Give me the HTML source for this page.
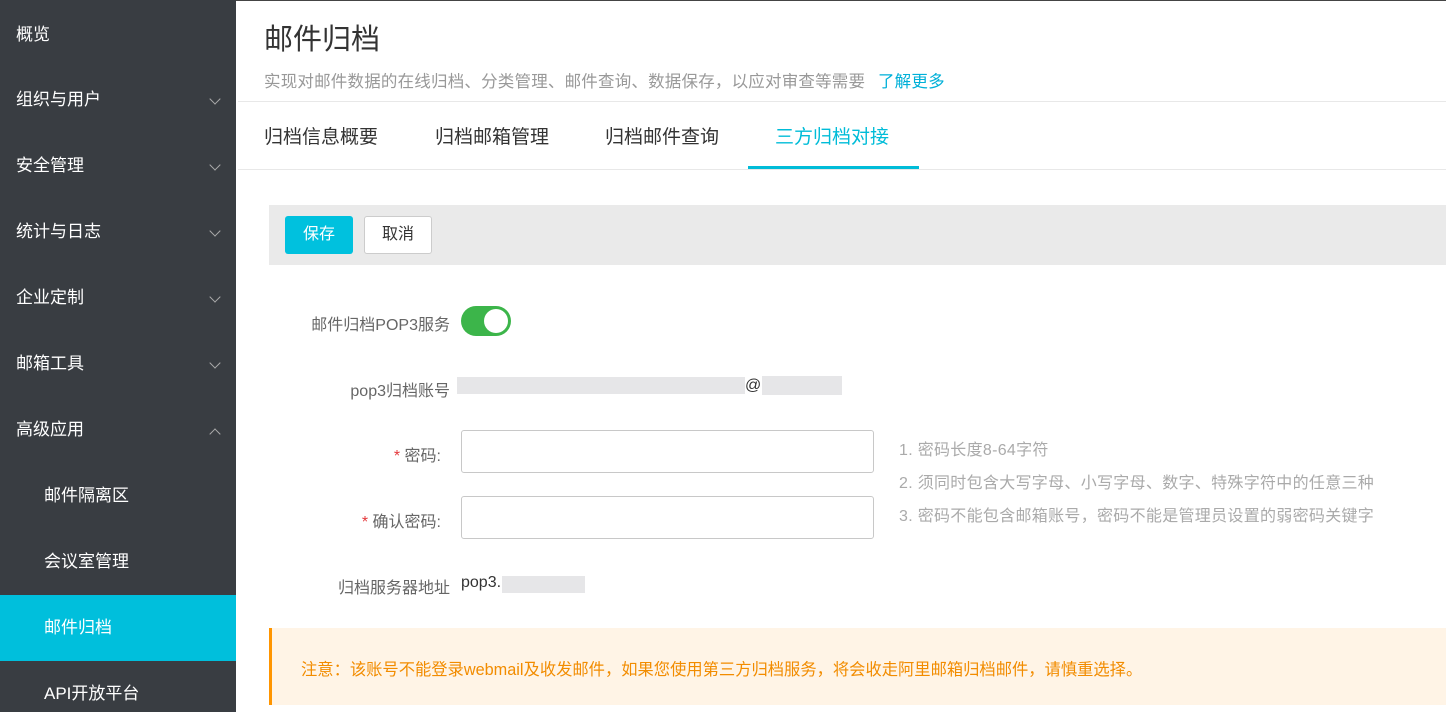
<!DOCTYPE html><html><head><meta charset="utf-8"><style>
*{margin:0;padding:0;box-sizing:border-box}
body{width:1446px;height:712px;overflow:hidden;font-family:"Liberation Sans","Noto Sans CJK SC",sans-serif;background:#fff;position:relative}
.sb{position:absolute;left:0;top:0;width:236px;height:712px;background:#393d42}
.it{position:absolute;left:0;width:236px;height:66px;color:#fff;font-size:17px;line-height:66px;padding-left:16px}
.it.sub{padding-left:44px}
.it.act{background:#00bfdc}
.chev{position:absolute;right:17px;top:28px;width:8px;height:8px;border-right:1.5px solid #aaa;border-bottom:1.5px solid #aaa;transform:rotate(45deg)}
.chev.up{transform:rotate(-135deg);top:33px}
.main{position:absolute;left:236px;top:0;right:0;height:712px;border-top:1px solid #444}
.abs{position:absolute;white-space:nowrap}
.tab{position:absolute;top:122px;font-size:19px;color:#333}
.lbl{position:absolute;font-size:16px;color:#666;text-align:right;white-space:nowrap}
.inp{position:absolute;left:461px;width:413px;height:43px;border:1px solid #c8c8c8;border-radius:3px}
.blur{position:absolute;background:#e6e6e8;height:17px}
.hint{position:absolute;left:899px;font-size:16px;color:#aaa;white-space:nowrap;letter-spacing:0.3px}
</style></head><body>
<div class="sb">
<div class="it" style="top:2px">概览</div>
<div class="it" style="top:67px">组织与用户<span class="chev"></span></div>
<div class="it" style="top:133px">安全管理<span class="chev"></span></div>
<div class="it" style="top:199px">统计与日志<span class="chev"></span></div>
<div class="it" style="top:265px">企业定制<span class="chev"></span></div>
<div class="it" style="top:331px">邮箱工具<span class="chev"></span></div>
<div class="it" style="top:397px">高级应用<span class="chev up"></span></div>
<div class="it sub" style="top:463px">邮件隔离区</div>
<div class="it sub" style="top:529px">会议室管理</div>
<div class="it sub act" style="top:595px">邮件归档</div>
<div class="it sub" style="top:661px">API开放平台</div>
</div>
<div class="main"></div>
<div class="abs" style="left:264px;top:16px;font-size:29px;color:#333">邮件归档</div>
<div class="abs" style="left:264px;top:68px;font-size:16.5px;color:#999;letter-spacing:0.2px">实现对邮件数据的在线归档、分类管理、邮件查询、数据保存，以应对审查等需要 <span style="color:#00b0d8;margin-left:8px">了解更多</span></div>
<div class="abs" style="left:238px;top:101px;width:1208px;height:1px;background:#e8e8e8"></div>
<div class="tab" style="left:264px">归档信息概要</div>
<div class="tab" style="left:435px">归档邮箱管理</div>
<div class="tab" style="left:605px">归档邮件查询</div>
<div class="tab" style="left:775px;color:#00bcd8">三方归档对接</div>
<div class="abs" style="left:748px;top:166px;width:171px;height:3px;background:#00bcd8"></div>
<div class="abs" style="left:238px;top:169px;width:1208px;height:1px;background:#e8e8e8"></div>
<div class="abs" style="left:269px;top:205px;width:1177px;height:60px;background:#eaeaea"></div>
<div class="abs" style="left:285px;top:216px;width:68px;height:38px;background:#00c1de;border-radius:3px;color:#fff;font-size:16px;line-height:38px;text-align:center">保存</div>
<div class="abs" style="left:364px;top:216px;width:68px;height:38px;background:#fff;border:1px solid #ccc;border-radius:3px;color:#333;font-size:16px;line-height:36px;text-align:center">取消</div>
<div class="lbl" style="right:996px;top:311px">邮件归档POP3服务</div>
<div class="abs" style="left:461px;top:306px;width:50px;height:30px;border-radius:15px;background:#3cb54a"><div style="position:absolute;right:3px;top:3px;width:24px;height:24px;border-radius:12px;background:#fff"></div></div>
<div class="lbl" style="right:996px;top:377px">pop3归档账号</div>
<div class="blur" style="left:457px;top:377px;width:288px"></div>
<div class="abs" style="left:745px;top:377px;font-size:16px;color:#333">@</div>
<div class="blur" style="left:762px;top:376px;width:80px;height:19px"></div>
<div class="lbl" style="right:1005px;top:442px"><span style="color:#e4393c">* </span>密码:</div>
<div class="inp" style="top:430px"></div>
<div class="lbl" style="right:1005px;top:508px"><span style="color:#e4393c">* </span>确认密码:</div>
<div class="inp" style="top:496px"></div>
<div class="hint" style="top:436px">1. 密码长度8-64字符</div>
<div class="hint" style="top:469px">2. 须同时包含大写字母、小写字母、数字、特殊字符中的任意三种</div>
<div class="hint" style="top:502px">3. 密码不能包含邮箱账号，密码不能是管理员设置的弱密码关键字</div>
<div class="lbl" style="right:996px;top:574px">归档服务器地址</div>
<div class="abs" style="left:461px;top:574px;font-size:16px;color:#333">pop3.</div>
<div class="blur" style="left:502px;top:576px;width:83px"></div>
<div class="abs" style="left:269px;top:628px;width:1177px;height:77px;background:#fff4e6;border-left:3px solid #ff9500"></div>
<div class="abs" style="left:301px;top:656px;font-size:16.3px;color:#f28c00">注意：该账号不能登录webmail及收发邮件，如果您使用第三方归档服务，将会收走阿里邮箱归档邮件，请慎重选择。</div>
</body></html>
